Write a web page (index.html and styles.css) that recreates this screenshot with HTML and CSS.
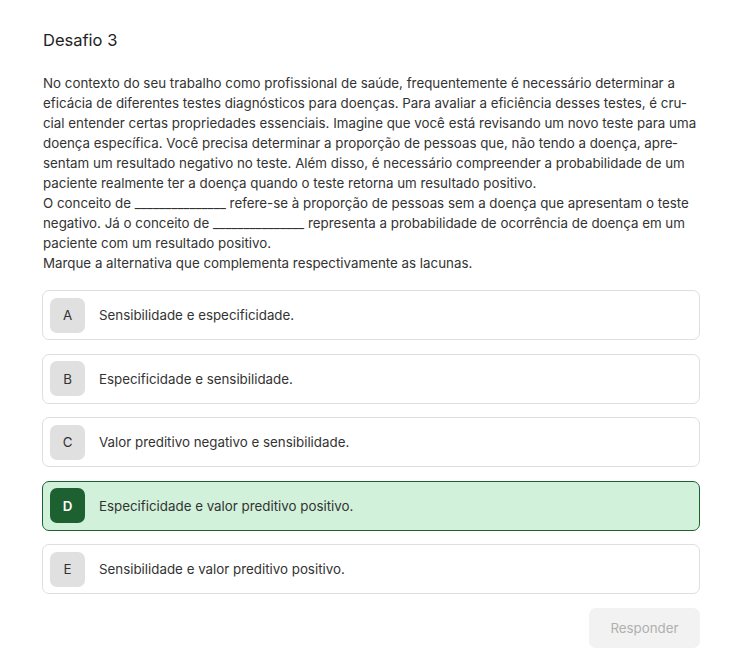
FILE: index.html
```html
<!DOCTYPE html>
<html lang="pt">
<head>
<meta charset="utf-8">
<link rel="stylesheet" href="styles.css">
</head>
<body>
<main class="page">
  <h1 class="title">Desafio 3</h1>
  <div class="statement">
    <p>No contexto do seu trabalho como profissional de saúde, frequentemente é necessário determinar a eficácia de diferentes testes diagnósticos para doenças. Para avaliar a eficiência desses testes, é cru&shy;cial entender certas propriedades essenciais. Imagine que você está revisando um novo teste para uma doença específica. Você precisa determinar a proporção de pessoas que, não tendo a doença, apre&shy;sentam um resultado negativo no teste. Além disso, é necessário compreender a probabilidade de um paciente realmente ter a doença quando o teste retorna um resultado positivo.</p>
    <p>O conceito de _______________ refere-se à proporção de pessoas sem a doença que apresentam o teste negativo. Já o conceito de _______________ representa a probabilidade de ocorrência de doença em um paciente com um resultado positivo.</p>
    <p>Marque a alternativa que complementa respectivamente as lacunas.</p>
  </div>
  <ul class="options">
    <li class="option"><span class="letter">A</span><span class="label">Sensibilidade e especificidade.</span></li>
    <li class="option"><span class="letter">B</span><span class="label">Especificidade e sensibilidade.</span></li>
    <li class="option"><span class="letter">C</span><span class="label">Valor preditivo negativo e sensibilidade.</span></li>
    <li class="option selected"><span class="letter">D</span><span class="label">Especificidade e valor preditivo positivo.</span></li>
    <li class="option"><span class="letter">E</span><span class="label">Sensibilidade e valor preditivo positivo.</span></li>
  </ul>
  <div class="actions">
    <button class="submit" disabled>Responder</button>
  </div>
</main>
</body>
</html>
```
FILE: styles.css
```css
* { box-sizing: border-box; }
html, body { margin: 0; padding: 0; background: #fff; }
body {
  font-family: Inter, "Noto Sans", sans-serif;
  color: #333;
}
.page {
  width: 658px;
  margin-left: 42px;
  padding-top: 28px;
}
.title {
  margin: 0;
  font-size: 16.5px;
  font-weight: 400;
  line-height: 24px;
  color: #222;
  padding-left: 1px;
}
.statement {
  margin-top: 21px;
  padding-left: 1px;
  font-size: 13.33px;
  line-height: 20px;
  hyphens: manual;
}
.statement p { margin: 0; }
.options {
  list-style: none;
  margin: 17px 0 0 0;
  padding: 0;
  display: flex;
  flex-direction: column;
  gap: 13.5px;
}
.option {
  display: flex;
  align-items: center;
  gap: 14px;
  height: 50px;
  padding: 0 7px;
  border: 1px solid #dedede;
  border-radius: 7px;
  font-size: 13.33px;
}
.letter {
  width: 35px;
  height: 35px;
  border-radius: 7px;
  background: #e0e0e0;
  display: flex;
  align-items: center;
  justify-content: center;
  color: #333;
}
.option.selected {
  background: #d1f1da;
  border-color: #1e6130;
}
.option.selected .letter {
  background: #1e6130;
  color: #fff;
  font-weight: 600;
}
.actions {
  display: flex;
  justify-content: flex-end;
  margin-top: 14px;
}
.submit {
  width: 111px;
  height: 40px;
  border: none;
  border-radius: 7px;
  background: #f2f2f2;
  color: #b0b0b0;
  font-family: inherit;
  font-size: 13.33px;
}
```
